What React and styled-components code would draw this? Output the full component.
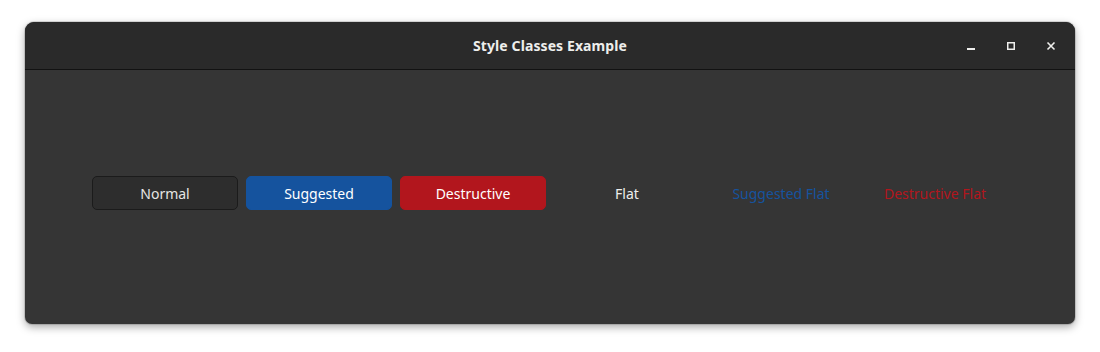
import React from "react";
import styled, { createGlobalStyle } from "styled-components";

const GlobalStyle = createGlobalStyle`
  * { box-sizing: border-box; }
  html, body {
    margin: 0;
    padding: 0;
    background: #ffffff;
    font-family: "Noto Sans", "DejaVu Sans", sans-serif;
  }
`;

const Page = styled.div`
  width: 1100px;
  height: 352px;
  padding: 22px 25px 28px 25px;
`;

const Window = styled.div`
  height: 302px;
  display: flex;
  flex-direction: column;
  background: #353535;
  border-radius: 9px 9px 7px 7px;
  overflow: hidden;
  box-shadow: 0 3px 9px rgba(0, 0, 0, 0.35), 0 0 0 1px rgba(0, 0, 0, 0.12);
`;

const HeaderBar = styled.header`
  height: 48px;
  flex: none;
  display: grid;
  grid-template-columns: 1fr auto 1fr;
  align-items: center;
  background: #2a2a2a;
  border-bottom: 1px solid #121212;
`;

const Title = styled.h1`
  grid-column: 2;
  margin: 0;
  font-size: 14px;
  font-weight: 700;
  color: #eeeeec;
  letter-spacing: 0.1px;
`;

const Controls = styled.div`
  grid-column: 3;
  justify-self: end;
  display: flex;
  gap: 16px;
  padding-right: 12px;
`;

const ControlButton = styled.button`
  width: 24px;
  height: 24px;
  border: none;
  padding: 0;
  background: transparent;
  display: flex;
  align-items: center;
  justify-content: center;
  color: #eeeeec;
`;

const Content = styled.main`
  flex: 1;
  display: flex;
  align-items: center;
  justify-content: center;
  gap: 8px;
  padding-bottom: 8px;
`;

const variants = {
  normal: { bg: "#2d2d2d", border: "#1b1b1b", color: "#e6e6e4" },
  suggested: { bg: "#15539e", border: "#15539e", color: "#ffffff" },
  destructive: { bg: "#b2161d", border: "#b2161d", color: "#ffffff" },
  flat: { bg: "transparent", border: "transparent", color: "#eeeeec" },
  suggestedFlat: { bg: "transparent", border: "transparent", color: "#15539e" },
  destructiveFlat: { bg: "transparent", border: "transparent", color: "#b2161d" },
};

const Button = styled.button`
  width: 146px;
  height: 34px;
  border-radius: 5px;
  border: 1px solid ${(p) => variants[p.$kind].border};
  background: ${(p) => variants[p.$kind].bg};
  color: ${(p) => variants[p.$kind].color};
  font-family: "Noto Sans", "DejaVu Sans", sans-serif;
  font-size: 14px;
  padding: 0;
`;

const buttons = [
  ["normal", "Normal"],
  ["suggested", "Suggested"],
  ["destructive", "Destructive"],
  ["flat", "Flat"],
  ["suggestedFlat", "Suggested Flat"],
  ["destructiveFlat", "Destructive Flat"],
];

export default function App() {
  return (
    <>
      <GlobalStyle />
      <Page>
        <Window>
          <HeaderBar>
            <Title>Style Classes Example</Title>
            <Controls>
              <ControlButton aria-label="Minimize">
                <svg width="10" height="10" viewBox="0 0 10 10">
                  <rect x="1" y="7" width="8" height="2" fill="currentColor" />
                </svg>
              </ControlButton>
              <ControlButton aria-label="Maximize">
                <svg width="10" height="10" viewBox="0 0 10 10">
                  <rect x="1.75" y="1.75" width="6.5" height="6.5" fill="none" stroke="currentColor" strokeWidth="1.5" />
                </svg>
              </ControlButton>
              <ControlButton aria-label="Close">
                <svg width="10" height="10" viewBox="0 0 10 10">
                  <path d="M1.5 1.5 L8.5 8.5 M8.5 1.5 L1.5 8.5" stroke="currentColor" strokeWidth="1.6" />
                </svg>
              </ControlButton>
            </Controls>
          </HeaderBar>
          <Content>
            {buttons.map(([kind, label]) => (
              <Button key={kind} $kind={kind}>
                {label}
              </Button>
            ))}
          </Content>
        </Window>
      </Page>
    </>
  );
}
